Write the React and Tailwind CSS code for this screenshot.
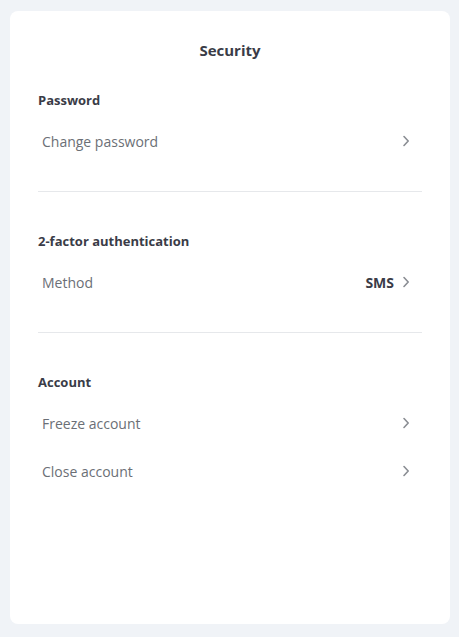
import React from 'react'

const Chevron = () => (
  <svg width="8" height="12" viewBox="0 0 8 12" fill="none" className="text-[#8a8d93]">
    <path d="M2 1.5 6.2 6 2 10.5" stroke="currentColor" strokeWidth="1.6" strokeLinecap="round" strokeLinejoin="round" />
  </svg>
)

const Row = ({ label, value }) => (
  <div className="h-12 flex items-center justify-between pl-1 pr-3 cursor-pointer">
    <span className="text-[14px] text-[#6b6f76]">{label}</span>
    <div className="flex items-center gap-2">
      {value && <span className="text-[14px] font-bold text-[#3a3c47]">{value}</span>}
      <Chevron />
    </div>
  </div>
)

const Section = ({ title, children }) => (
  <div>
    <h3 className="text-[13px] leading-5 font-bold text-[#3a3c47] mb-[7px]">{title}</h3>
    {children}
  </div>
)

export default function App() {
  return (
    <div
      className="min-h-screen bg-[#f0f3f7] pt-[11px] pl-[10px] pr-[9px]"
      style={{ fontFamily: '"Open Sans", Lato, sans-serif' }}
    >
      <div className="h-[613px] bg-white rounded-lg px-7 pt-[29px]">
        <h2 className="text-center text-[15px] leading-5 font-bold text-[#3a3c47] mb-[30px]">Security</h2>

        <Section title="Password">
          <Row label="Change password" />
        </Section>

        <div className="border-t border-[#e6e8eb] mt-[26px] mb-[39px]" />

        <Section title="2-factor authentication">
          <Row label="Method" value="SMS" />
        </Section>

        <div className="border-t border-[#e6e8eb] mt-[26px] mb-[39px]" />

        <Section title="Account">
          <Row label="Freeze account" />
          <Row label="Close account" />
        </Section>
      </div>
    </div>
  )
}
